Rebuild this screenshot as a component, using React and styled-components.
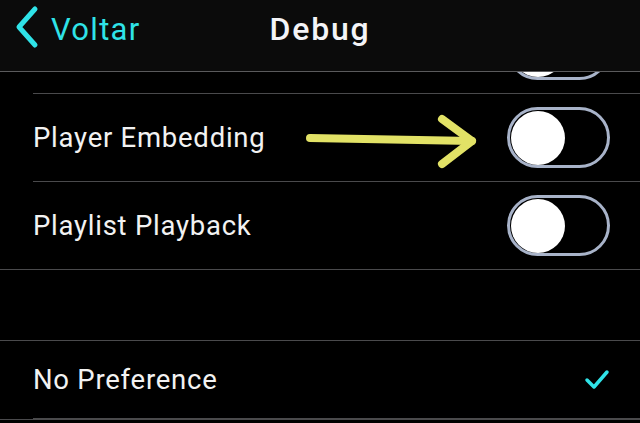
import React from 'react';
import styled, { createGlobalStyle } from 'styled-components';

const GlobalStyle = createGlobalStyle`
  html, body {
    margin: 0;
    padding: 0;
    background: #000;
  }
  body {
    font-family: Roboto, "Liberation Sans", sans-serif;
    -webkit-font-smoothing: antialiased;
  }
`;

const rows = [
  { label: '', on: false },
  { label: 'Player Embedding', on: false },
  { label: 'Playlist Playback', on: false },
];

const App = () => (
  <>
    <GlobalStyle />
    <Screen>
      <NavBar>
        <BackButton>
          <svg width="28" height="44" viewBox="0 0 28 44">
            <path d="M23 4 L7 22 L23 40" fill="none" stroke="#2fe3e8" strokeWidth="5" strokeLinecap="round" strokeLinejoin="round" />
          </svg>
          <BackLabel>Voltar</BackLabel>
        </BackButton>
        <Title>Debug</Title>
      </NavBar>

      <Content>
        <Section $offset={-66}>
          {rows.map((r, i) => (
            <Row key={i} $last={i === rows.length - 1}>
              <Label>{r.label}</Label>
              <Toggle>
                <Knob />
              </Toggle>
            </Row>
          ))}
        </Section>

        <Spacer />

        <Section>
          <Row $short>
            <Label>No Preference</Label>
            <svg width="26" height="22" viewBox="0 0 26 22">
              <path d="M3 11 L10 18 L23 3" fill="none" stroke="#2fe3e8" strokeWidth="3.5" strokeLinecap="round" strokeLinejoin="round" />
            </svg>
          </Row>
        </Section>

        <Arrow width="180" height="60" viewBox="0 0 180 60">
          <path d="M4 25 L166 28" fill="none" stroke="#e2e266" strokeWidth="8" strokeLinecap="round" />
          <path d="M136 6 L166 28 L136 51" fill="none" stroke="#e2e266" strokeWidth="8" strokeLinecap="round" strokeLinejoin="round" />
        </Arrow>
      </Content>
    </Screen>
  </>
);

export default App;

const Screen = styled.div`
  width: 640px;
  height: 423px;
  overflow: hidden;
  background: #000;
  display: flex;
  flex-direction: column;
`;

const NavBar = styled.div`
  position: relative;
  z-index: 2;
  height: 71px;
  flex-shrink: 0;
  background: #0b0b0b;
  border-bottom: 1px solid #5a5a5c;
  display: flex;
  align-items: center;
  justify-content: center;
`;

const BackButton = styled.div`
  position: absolute;
  left: 12px;
  top: 5px;
  display: flex;
  align-items: center;
  gap: 11px;
`;

const BackLabel = styled.span`
  color: #2fe3e8;
  font-size: 31px;
  letter-spacing: 1.3px;
  margin-top: 4px;
`;

const Title = styled.h1`
  margin: 0 0 14px 0;
  color: #f4f4f7;
  font-size: 32px;
  font-weight: 500;
  letter-spacing: 1.8px;
`;

const Content = styled.div`
  position: relative;
  flex: 1;
  overflow: hidden;
`;

const Section = styled.div`
  margin-top: ${({ $offset }) => ($offset ? `${$offset}px` : '0')};
  border-bottom: 1px solid #4a4a4c;
  border-top: ${({ $offset }) => ($offset ? 'none' : '1px solid #4a4a4c')};
`;

const Row = styled.div`
  height: ${({ $short }) => ($short ? '77px' : '87px')};
  margin-left: 33px;
  padding-right: 30px;
  display: flex;
  align-items: center;
  justify-content: space-between;
  border-bottom: ${({ $last }) => ($last ? 'none' : '1px solid #4a4a4c')};
`;

const Label = styled.span`
  color: #f2f2f2;
  font-size: 27.5px;
  letter-spacing: 0.75px;
`;

const Toggle = styled.div`
  width: 96px;
  height: 55px;
  border: 3px solid #a8b3c9;
  border-radius: 31px;
  display: flex;
  align-items: center;
  padding-left: 1px;
`;

const Knob = styled.div`
  width: 54px;
  height: 54px;
  border-radius: 50%;
  background: #fff;
`;

const Spacer = styled.div`
  height: 70px;
`;

const Arrow = styled.svg`
  position: absolute;
  left: 306px;
  top: 41px;
`;
